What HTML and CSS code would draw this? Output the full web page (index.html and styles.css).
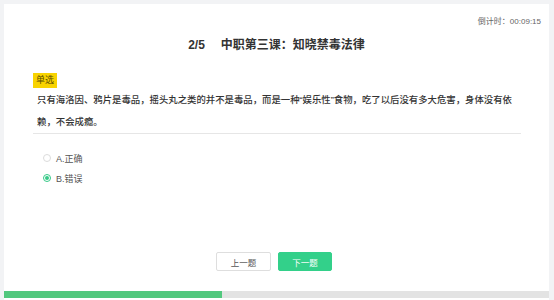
FILE: index.html
```html
<!DOCTYPE html>
<html lang="zh-CN">
<head>
  <meta charset="UTF-8" />
  <title>中职第三课：知晓禁毒法律</title>
  <link rel="stylesheet" href="styles.css">
</head>
<body>
  <main class="exam">
    <div class="timer">倒计时：00:09:15</div>
    <h1 class="title"><span class="count">2/5</span>中职第三课：知晓禁毒法律</h1>

    <section class="question">
      <div class="tag">单选</div>
      <p class="stem">只有海洛因、鸦片是毒品，摇头丸之类的并不是毒品，而是一种“娱乐性”食物，吃了以后没有多大危害，身体没有依赖，不会成瘾。</p>

      <ul class="options">
        <li class="option"><span class="radio"></span>A.正确</li>
        <li class="option checked"><span class="radio"></span>B.错误</li>
      </ul>
    </section>

    <div class="actions">
      <button class="btn">上一题</button>
      <button class="btn primary">下一题</button>
    </div>

    <div class="progress">
      <div class="progress-bar" style="width: 40%"></div>
    </div>
  </main>
</body>
</html>
```

FILE: styles.css
```css
* {
  box-sizing: border-box;
}

html, body {
  margin: 0;
  height: 100%;
  background: #f2f3f5;
  font-family: "Liberation Sans", "Noto Sans CJK SC", sans-serif;
  color: #333;
}

.exam {
  margin: 4px 5px 0 4px;
  height: 296px;
  background: #fff;
  display: flex;
  flex-direction: column;
}

.timer {
  text-align: right;
  font-size: 8px;
  line-height: 12px;
  color: #666;
  padding: 12px 8px 0 0;
}

.title {
  margin: 8px 0 0;
  text-align: center;
  font-size: 12px;
  line-height: 18px;
  font-weight: bold;
  color: #333;
}

.title .count {
  margin-right: 16px;
}

.question {
  margin: 19px 28px 0 29px;
}

.tag {
  width: fit-content;
  background: #f8d300;
  color: #5a4c00;
  font-size: 9px;
  line-height: 11px;
  padding: 2px 3px;
}

.stem {
  margin: 1px 0 0;
  padding: 0 8px 0 4px;
  font-size: 9.4px;
  line-height: 22px;
  font-weight: 500;
  color: #333;
  border-bottom: 1px solid #e6e6e6;
}

.options {
  list-style: none;
  margin: 14px 0 0;
  padding: 0 0 0 10px;
}

.option {
  display: flex;
  align-items: center;
  height: 20px;
  font-size: 9px;
  color: #555;
}

.radio {
  width: 8px;
  height: 8px;
  border: 1px solid #dcdcdc;
  border-radius: 50%;
  margin-right: 5px;
  display: flex;
  align-items: center;
  justify-content: center;
}

.option.checked .radio {
  border-color: #36c987;
}

.option.checked .radio::after {
  content: "";
  width: 4px;
  height: 4px;
  border-radius: 50%;
  background: #36c987;
}

.actions {
  margin-top: auto;
  display: flex;
  justify-content: center;
  gap: 7px;
  padding-right: 5px;
}

.btn {
  width: 55px;
  height: 19px;
  font-family: inherit;
  font-size: 8.5px;
  border: 1px solid #dedede;
  border-radius: 2px;
  background: #fff;
  color: #555;
  padding: 0;
}

.btn.primary {
  width: 54px;
  border-color: #33d08a;
  background: #33d08a;
  color: #fff;
}

.progress {
  margin: 20px 0 2px;
  height: 7px;
  background: #e3e3e3;
}

.progress-bar {
  height: 100%;
  background: #52c87e;
}
```
